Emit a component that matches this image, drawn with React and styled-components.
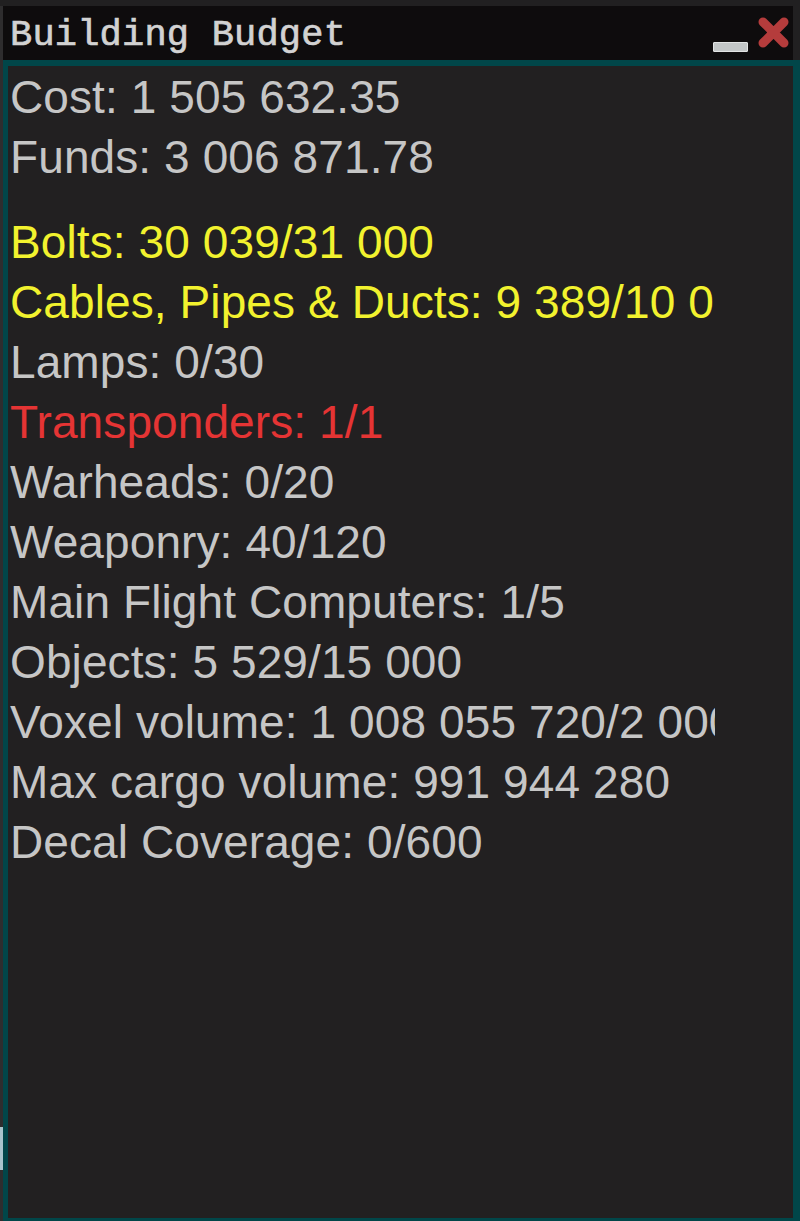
import React from 'react';
import styled, { createGlobalStyle } from 'styled-components';

const GlobalStyle = createGlobalStyle`
  html, body {
    margin: 0;
    padding: 0;
    background: #212021;
  }
  #root {
    height: 1221px;
  }
`;

const Screen = styled.div`
  display: flex;
  height: 1221px;
  padding-top: 6px;
  box-sizing: border-box;
`;

const DesktopEdge = styled.div`
  width: 3px;
  display: flex;
  flex-direction: column;
  background: #2e2d2e;
`;

const EdgeSpacer = styled.div`
  height: ${(p) => p.$h}px;
`;

const EdgeWidget = styled.div`
  height: 43px;
  background: #a9c4cc;
`;

const Window = styled.div`
  flex: 1;
  display: flex;
  flex-direction: column;
  min-width: 0;
`;

const TitleBar = styled.div`
  height: 54px;
  margin-right: 7px;
  background: #0e0c0d;
  display: flex;
  align-items: flex-start;
  padding: 0 3px 0 7px;
`;

const Title = styled.div`
  flex: 1;
  margin-top: 4px;
  font-family: 'Liberation Mono', 'DejaVu Sans Mono', monospace;
  font-size: 37px;
  line-height: 50px;
  color: #d2d2d2;
  white-space: nowrap;
  letter-spacing: 0.2px;
  -webkit-text-stroke: 0.7px #d2d2d2;
`;

const Controls = styled.div`
  display: flex;
  align-items: flex-start;
  gap: 9px;
  padding-top: 11px;
`;

const MinimizeButton = styled.div`
  width: 35px;
  height: 10px;
  margin-top: 25px;
  box-sizing: border-box;
  background: #c3c7c7;
  border: 1px solid #e2e4e4;
  border-radius: 1px;
`;

const CloseButton = styled.svg`
  width: 33px;
  height: 31px;
  display: block;
`;

const Panel = styled.div`
  flex: 1;
  background: #222021;
  border-style: solid;
  border-color: #014649;
  border-width: 6px 7px 3px 5px;
  padding: 1px 78px 0 2px;
  min-height: 0;
`;

const Stats = styled.div`
  overflow: hidden;
  font-family: 'Liberation Sans', Arial, sans-serif;
  font-size: 46px;
  line-height: 60px;
  letter-spacing: 0.1px;
`;

const Line = styled.div`
  white-space: nowrap;
  color: ${(p) => p.$color};
  margin-top: ${(p) => (p.$gap ? '25px' : '0')};
`;

const GREY = '#c6c6c6';
const YELLOW = '#f2f22e';
const RED = '#e53434';

const stats = [
  { text: 'Cost: 1 505 632.35', color: GREY },
  { text: 'Funds: 3 006 871.78', color: GREY },
  { text: 'Bolts: 30 039/31 000', color: YELLOW, gap: true },
  { text: 'Cables, Pipes & Ducts: 9 389/10 000', color: YELLOW },
  { text: 'Lamps: 0/30', color: GREY },
  { text: 'Transponders: 1/1', color: RED },
  { text: 'Warheads: 0/20', color: GREY },
  { text: 'Weaponry: 40/120', color: GREY },
  { text: 'Main Flight Computers: 1/5', color: GREY },
  { text: 'Objects: 5 529/15 000', color: GREY },
  { text: 'Voxel volume: 1 008 055 720/2 000 000 000', color: GREY },
  { text: 'Max cargo volume: 991 944 280', color: GREY },
  { text: 'Decal Coverage: 0/600', color: GREY },
];

const App = () => {
  return (
    <>
      <GlobalStyle />
      <Screen>
        <DesktopEdge>
          <EdgeSpacer $h={1121} />
          <EdgeWidget />
        </DesktopEdge>
        <Window>
          <TitleBar>
            <Title>Building Budget</Title>
            <Controls>
              <MinimizeButton />
              <CloseButton viewBox="0 0 33 31">
                <path
                  d="M6 5 L27 26 M27 5 L6 26"
                  stroke="#b53c3c"
                  strokeWidth="9"
                  strokeLinecap="round"
                  fill="none"
                />
              </CloseButton>
            </Controls>
          </TitleBar>
          <Panel>
            <Stats>
              {stats.map((s) => (
                <Line key={s.text} $color={s.color} $gap={s.gap}>
                  {s.text}
                </Line>
              ))}
            </Stats>
          </Panel>
        </Window>
      </Screen>
    </>
  );
};

export default App;
